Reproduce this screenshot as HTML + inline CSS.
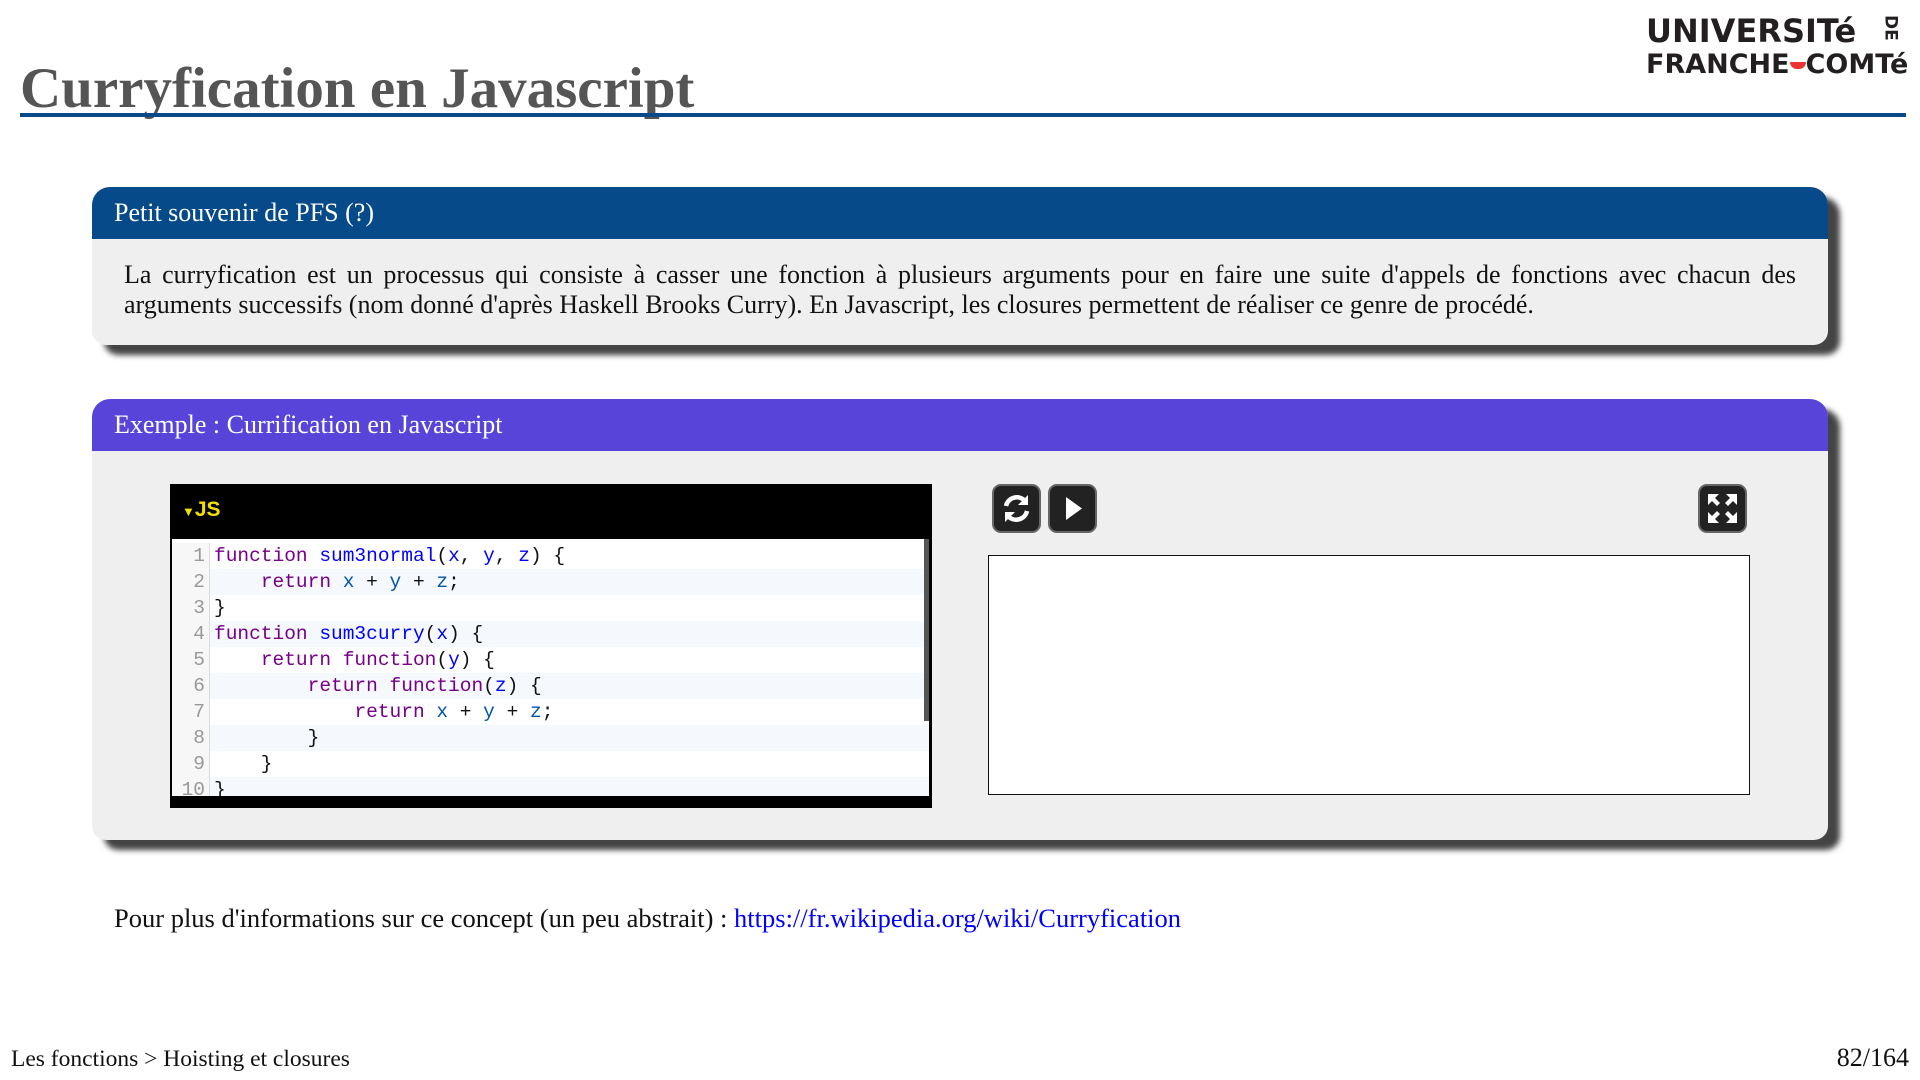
<!DOCTYPE html>
<html><head><meta charset="utf-8"><style>
*{margin:0;padding:0;box-sizing:border-box}
body{width:1920px;height:1080px;background:#fff;position:relative;overflow:hidden;font-family:"Liberation Serif",serif;color:#111}
.abs{position:absolute}
h1{position:absolute;left:20px;top:60px;font-size:57px;font-weight:bold;color:#555;font-family:"Liberation Serif",serif;line-height:1}
.rule{left:20px;top:113px;width:1886px;height:4px;background:#0a4a8a}
.logo{left:1646px;top:15px;font-family:"DejaVu Sans","Liberation Sans",sans-serif;font-weight:bold;color:#231f20;line-height:1;white-space:nowrap}
.box{position:absolute;left:92px;width:1736px;background:#efefef;border-radius:18px 18px 14px 14px;box-shadow:12px 10px 6px #444}
.hd{height:52px;border-radius:18px 18px 0 0;color:#fff;font-size:26px;padding-left:22px;line-height:52px}
.txt{padding:21px 32px 0 32px;font-size:26px;line-height:30px;text-align:justify}
.code{left:170px;top:484px;width:762px;height:324px;background:#000}
.code .top{height:55px;color:#f2e000;font-family:"Liberation Sans",sans-serif;font-weight:bold;font-size:21px;padding:14px 0 0 12px}
.lines{position:absolute;left:2px;top:55px;width:757px;height:257px;background:#fff;overflow:hidden;padding-top:4px}
.ln{height:26px;line-height:26px;font-family:"Liberation Mono",monospace;font-size:19.5px;white-space:pre;display:flex}
.ln:nth-child(even){background:#f5f8fc}
.g{width:38px;text-align:right;color:#999;border-right:1px solid #ddd;background:#f7f7f7;padding-right:4px;margin-right:4px}
.k{color:#708}.d{color:#00f}.v{color:#05a}
.sb{position:absolute;right:0;top:0;width:5px;height:182px;background:#555}
.btn{position:absolute;top:484px;width:49px;height:49px;background:#222;border:2px solid #666;border-radius:9px}
.out{left:988px;top:555px;width:762px;height:240px;background:#fff;border:1.5px solid #111}
.red{display:inline-block;width:16px;height:7px;background:#e33;border-radius:0 0 8px 8px;vertical-align:middle}
</style></head><body>
<h1>Curryfication en Javascript</h1>
<div class="abs rule"></div>
<div class="abs logo"><div style="font-size:32px">UNIVERSITé <span style="font-size:17px;writing-mode:vertical-rl;vertical-align:top;margin-left:14px">DE</span></div><div style="font-size:27px;margin-top:4px">FRANCHE<span class="red"></span>COMTé</div></div>

<div class="box" style="top:187px;height:158px">
<div class="hd" style="background:#064a8a">Petit souvenir de PFS (?)</div>
<div class="txt">La curryfication est un processus qui consiste à casser une fonction à plusieurs arguments pour en faire une suite d'appels de fonctions avec chacun des arguments successifs (nom donné d'après Haskell Brooks Curry). En Javascript, les closures permettent de réaliser ce genre de procédé.</div>
</div>

<div class="box" style="top:399px;height:441px">
<div class="hd" style="background:#5944d9">Exemple : Currification en Javascript</div>
</div>

<div class="abs code"><div class="top"><span style="font-size:13px">▼</span>JS</div>
<div class="lines">
<div class="ln"><span class="g">1</span><span><span class="k">function</span> <span class="d">sum3normal</span>(<span class="d">x</span>, <span class="d">y</span>, <span class="d">z</span>) {</span></div>
<div class="ln"><span class="g">2</span><span>    <span class="k">return</span> <span class="v">x</span> + <span class="v">y</span> + <span class="v">z</span>;</span></div>
<div class="ln"><span class="g">3</span><span>}</span></div>
<div class="ln"><span class="g">4</span><span><span class="k">function</span> <span class="d">sum3curry</span>(<span class="d">x</span>) {</span></div>
<div class="ln"><span class="g">5</span><span>    <span class="k">return</span> <span class="k">function</span>(<span class="d">y</span>) {</span></div>
<div class="ln"><span class="g">6</span><span>        <span class="k">return</span> <span class="k">function</span>(<span class="d">z</span>) {</span></div>
<div class="ln"><span class="g">7</span><span>            <span class="k">return</span> <span class="v">x</span> + <span class="v">y</span> + <span class="v">z</span>;</span></div>
<div class="ln"><span class="g">8</span><span>        }</span></div>
<div class="ln"><span class="g">9</span><span>    }</span></div>
<div class="ln"><span class="g">10</span><span>}</span></div>
<div class="sb"></div>
</div></div>

<div class="btn" style="left:992px"><svg width="45" height="45" viewBox="0 0 45 45"><path d="M12 20a11 11 0 0 1 19-5" stroke="#fff" stroke-width="4.5" fill="none"/><path d="M34 9v10h-10z" fill="#fff"/><path d="M33 25a11 11 0 0 1-19 5" stroke="#fff" stroke-width="4.5" fill="none"/><path d="M11 36v-10h10z" fill="#fff"/></svg></div>
<div class="btn" style="left:1048px"><svg width="45" height="45" viewBox="0 0 45 45"><path d="M16 11l16 11.5-16 11.5z" fill="#fff"/></svg></div>
<div class="btn" style="left:1698px"><svg width="45" height="45" viewBox="0 0 45 45" fill="#fff"><path d="M8 8h11l-4 4 5 5-3 3-5-5-4 4z"/><path d="M37 8v11l-4-4-5 5-3-3 5-5-4-4z"/><path d="M8 37v-11l4 4 5-5 3 3-5 5 4 4z"/><path d="M37 37h-11l4-4-5-5 3-3 5 5 4-4z"/></svg></div>
<div class="abs out"></div>

<div class="abs" style="left:114px;top:903px;font-size:26.5px">Pour plus d'informations sur ce concept (un peu abstrait) : <span style="color:#00f">https://fr.wikipedia.org/wiki/Curryfication</span></div>
<div class="abs" style="left:11px;top:1046px;font-size:23.5px">Les fonctions &gt; Hoisting et closures</div>
<div class="abs" style="right:11px;top:1043px;font-size:26px">82/164</div>
</body></html>
